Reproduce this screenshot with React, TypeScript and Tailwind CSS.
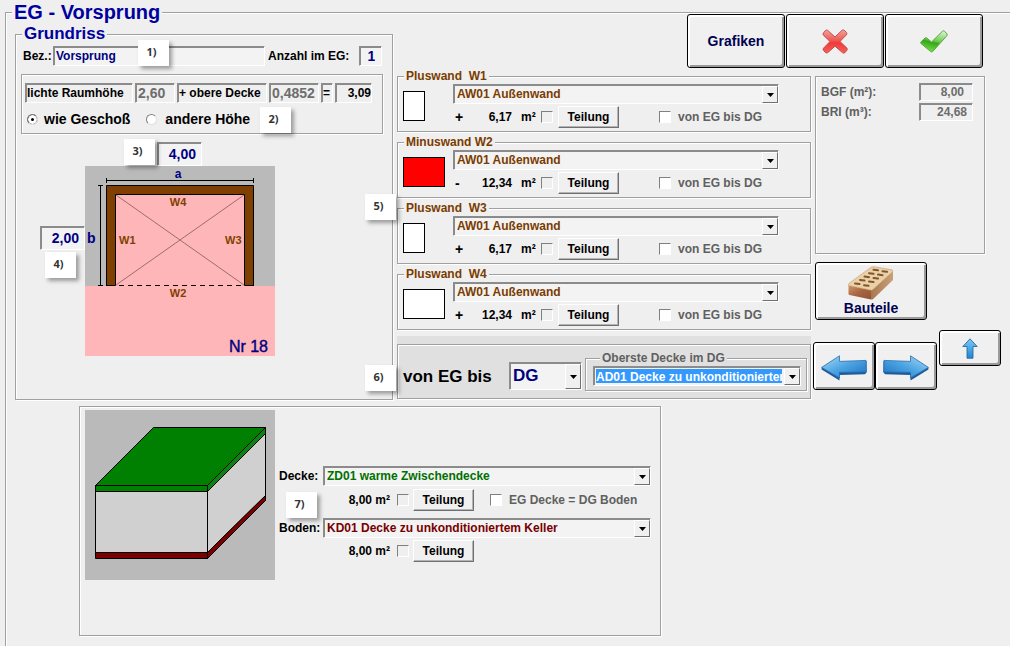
import { ReactNode, useState } from "react";
import { twMerge } from "tailwind-merge";

const etched =
  "border border-[#a0a0a0] shadow-[1px_1px_0_#fff,inset_1px_1px_0_#fff]";
const sunken =
  "border border-t-[#8c8c8c] border-l-[#8c8c8c] border-r-white border-b-white shadow-[inset_1px_1px_0_#8a8a8a]";
const bigButton =
  "flex items-center justify-center rounded-[3px] border border-black bg-[#f0f0f0] shadow-[inset_2px_2px_0_#fff,inset_-2px_-2px_0_#9a9a9a] cursor-pointer";

type Wall = {
  id: string;
  title: string;
  sign: string;
  area: string;
  swatch: string;
};

const walls: Wall[] = [
  { id: "w1", title: "Pluswand  W1", sign: "+", area: "6,17", swatch: "w-[22px] bg-white" },
  { id: "w2", title: "Minuswand W2", sign: "-", area: "12,34", swatch: "w-[42px] bg-[#ff0000]" },
  { id: "w3", title: "Pluswand  W3", sign: "+", area: "6,17", swatch: "w-[22px] bg-white" },
  { id: "w4", title: "Pluswand  W4", sign: "+", area: "12,34", swatch: "w-[42px] bg-white" },
];

const notes = [
  { text: "1)", place: "left-[138px] top-[40px]" },
  { text: "2)", place: "left-[260px] top-[107px]" },
  { text: "3)", place: "left-[124px] top-[139px]" },
  { text: "4)", place: "left-[45px] top-[252px]" },
  { text: "5)", place: "left-[365px] top-[194px]" },
  { text: "6)", place: "left-[365px] top-[365px]" },
  { text: "7)", place: "left-[286px] top-[492px]" },
];

function Combo({
  id,
  label,
  options,
  className,
  selectClassName,
}: {
  id: string;
  label?: string;
  options: string[];
  className?: string;
  selectClassName?: string;
}) {
  return (
    <div className={twMerge("relative h-5 min-w-0 bg-[#f3f3f3]", sunken, className)}>
      <select
        id={id}
        aria-label={label}
        className={twMerge(
          "block h-full w-full appearance-none bg-transparent pr-[18px] pl-[3px] text-xs font-bold outline-none",
          selectClassName
        )}
      >
        {options.map((option) => (
          <option key={option}>{option}</option>
        ))}
      </select>
      <span className="pointer-events-none absolute top-px right-0 bottom-0 flex w-4 items-center justify-center border border-t-white border-r-[#707070] border-b-[#707070] border-l-white bg-[#f0f0f0]">
        <svg width="7" height="4" viewBox="0 0 7 4">
          <path d="M0 0h7L3.5 4z" fill="#000" />
        </svg>
      </span>
    </div>
  );
}

function NumberField({
  id,
  label,
  value,
  disabled,
  className,
}: {
  id: string;
  label?: string;
  value: string;
  disabled?: boolean;
  className?: string;
}) {
  return (
    <input
      id={id}
      aria-label={label}
      defaultValue={value}
      disabled={disabled}
      className={twMerge(
        "min-w-0 bg-[#f3f3f3] px-[5px] text-right text-sm font-bold text-[#000080] outline-none disabled:bg-transparent disabled:text-[#6d6d6d]",
        sunken,
        className
      )}
    />
  );
}

function Tick({ id, label, className }: { id: string; label?: string; className?: string }) {
  return (
    <input
      id={id}
      type="checkbox"
      aria-label={label}
      className={twMerge(
        "size-3 shrink-0 appearance-none border border-t-[#808080] border-r-white border-b-white border-l-[#808080] checked:bg-black",
        className
      )}
    />
  );
}

function SplitButton({ className }: { className?: string }) {
  return (
    <button
      type="button"
      className={twMerge(
        "h-[22px] w-[61px] shrink-0 cursor-pointer border border-t-white border-r-[#707070] border-b-[#707070] border-l-white bg-[#f0f0f0] text-xs font-bold shadow-[inset_-1px_-1px_0_#b4b4b4]",
        className
      )}
    >
      Teilung
    </button>
  );
}

function WallPanel({ wall }: { wall: Wall }) {
  return (
    <fieldset className={twMerge("min-w-0 pb-[3px]", etched)}>
      <legend className="ml-1.5 bg-[#efefef] px-0.5 text-xs leading-4 font-bold whitespace-pre text-[#7a3c00]">
        {wall.title}
      </legend>
      <div className="flex">
        <div className="w-[55px] shrink-0 pt-[7px] pl-[5px]">
          <div className={twMerge("h-[30px] border border-black", wall.swatch)} />
        </div>
        <div className="flex min-w-0 flex-1 flex-col gap-0.5">
          <Combo
            id={`${wall.id}-type`}
            label={wall.title}
            options={["AW01 Außenwand"]}
            className="mr-[31px]"
            selectClassName="text-[#7a3c00]"
          />
          <div className="flex items-center">
            <span className="w-5 pl-0.5 text-sm leading-4 font-bold">{wall.sign}</span>
            <span className="w-[39px] text-right">{wall.area}</span>
            <span className="ml-[9px] w-5">m²</span>
            <Tick id={`${wall.id}-split`} label="Teilung aktiv" />
            <SplitButton className="ml-[5px]" />
            <Tick id={`${wall.id}-range`} className="ml-10 bg-white" />
            <label htmlFor={`${wall.id}-range`} className="ml-[7px] text-[#606060]">
              von EG bis DG
            </label>
          </div>
        </div>
      </div>
    </fieldset>
  );
}

function FloorPlan() {
  return (
    <svg width="190" height="190" viewBox="0 0 190 190" className="block">
      <rect width="190" height="190" fill="#bababa" />
      <rect y="120" width="190" height="70" fill="#ffb6b8" />
      <path d="M21.5 119.5V19.5h147v100" fill="#7f3f00" stroke="#000" />
      <path d="M30.5 120V28.5h129V120z" fill="#ffb6b8" />
      <path d="M30.5 119.5V28.5h129v91M21 119.5h9.5M159.5 119.5h9.5" fill="none" stroke="#000" />
      <path d="M31 29l128 90M159 29L31 119" stroke="#9c6c6e" />
      <path d="M34 119.5h125" stroke="#000" strokeDasharray="5 4" />
      <path d="M21.5 14.5h147M21.5 12v5M168.5 12v5M15.5 19.5v100M13 19.5h5M13 119.5h5" stroke="#000" fill="none" />
      <g fontWeight="700" fill="#7f3f00" fontSize="11">
        <text x="93" y="40" textAnchor="middle">W4</text>
        <text x="34" y="78">W1</text>
        <text x="140" y="78">W3</text>
        <text x="93" y="131" textAnchor="middle">W2</text>
      </g>
      <g fontWeight="700" fill="#000080">
        <text x="93" y="12" textAnchor="middle" fontSize="12">a</text>
        <text x="2" y="77" fontSize="14">b</text>
        <text x="183" y="186" textAnchor="end" fontSize="16" fontWeight="400" stroke="#000080" strokeWidth="0.4">
          Nr 18
        </text>
      </g>
    </svg>
  );
}

function StoreyBlock() {
  return (
    <svg width="190" height="170" viewBox="0 0 190 170" className="block shrink-0">
      <rect width="190" height="170" fill="#bababa" />
      <g stroke="#000" strokeLinejoin="round">
        <path d="M10.5 81.5h112v61h-112z" fill="#d0d0d0" />
        <path d="M122.5 81.5l58-58v62l-58 57z" fill="#d0d0d0" />
        <path d="M10.5 142.5h112v6h-112z" fill="#7b0000" />
        <path d="M122.5 142.5l58-57v5l-58 58z" fill="#7b0000" />
        <path d="M68.5 17.5h112l-58 58h-112z" fill="#008000" />
        <path d="M10.5 75.5h112v6h-112z" fill="#008000" />
        <path d="M122.5 75.5l58-58v6l-58 58z" fill="#108010" />
      </g>
    </svg>
  );
}

function CancelIcon() {
  return (
    <svg width="26" height="25" viewBox="0 0 26 25">
      <defs>
        <linearGradient id="red" x1="0" y1="0" x2="0" y2="1">
          <stop offset="0" stopColor="#f6a09c" />
          <stop offset="0.45" stopColor="#ee5a55" />
          <stop offset="0.55" stopColor="#f23a38" />
          <stop offset="1" stopColor="#f5605c" />
        </linearGradient>
      </defs>
      <path
        d="M5.500 1.200L13 8l7.200-6.800q1.400-.8 2.600.5l1.800 2q.8 1.200-.3 2.200L18 12.500l7 6.700q.8 1-.2 2.200L22.800 23.800q-1.300.8-2.400-.2L13 17.200l-7.200 6.400q-1.200.9-2.400-.2L1.400 21.400q-.9-1.200.2-2.300L8 12.500 1.400 6.200q-.9-1.200 0-2.200L3.300 1.600q1-.9 2.200-.4z"
        fill="url(#red)"
        stroke="#c0524f"
      />
    </svg>
  );
}

function ConfirmIcon() {
  return (
    <svg width="28" height="23" viewBox="0 0 28 23">
      <defs>
        <linearGradient id="green" x1="0.6" y1="0" x2="0.3" y2="1">
          <stop offset="0" stopColor="#d0f0c4" />
          <stop offset="0.45" stopColor="#6cc94f" />
          <stop offset="0.55" stopColor="#35a814" />
          <stop offset="1" stopColor="#7be34d" />
        </linearGradient>
      </defs>
      <path
        d="M.8 12L5 8q1-.7 1.900.1L11.500 12 22.500 1.200q1-.8 2 0l2.500 2.800q.6 1-.2 1.800L12.600 21.600q-.8.8-1.800 0L.9 13.400q-.6-.8-.1-1.400z"
        fill="url(#green)"
        stroke="#5aa548"
      />
    </svg>
  );
}

function BrickIcon() {
  return (
    <svg width="48" height="34" viewBox="0 0 48 34">
      <defs>
        <linearGradient id="brickFront" x1="0" y1="0" x2="1" y2="1">
          <stop offset="0" stopColor="#cf9468" />
          <stop offset="0.5" stopColor="#a86440" />
          <stop offset="1" stopColor="#8e5436" />
        </linearGradient>
        <linearGradient id="brickSide" x1="0" y1="0" x2="1" y2="0">
          <stop offset="0" stopColor="#a97850" />
          <stop offset="1" stopColor="#c9a079" />
        </linearGradient>
      </defs>
      <path d="M1.500 19.500L24 24V33.500L2.500 29Q1 28.500 1.500 27z" fill="url(#brickFront)" />
      <path d="M24 24L46 5.500V14L26.500 32.700Q25 33.900 24 33.500z" fill="url(#brickSide)" />
      <path
        d="M1.500 19.500Q.8 18.500 2.500 17L23 2q2-1.400 4-1.200L45 3.800q1.500.6.600 1.900L26 23.500q-1 .9-2.500.6z"
        fill="#ecd0a6"
        stroke="#c19a6c"
        strokeWidth=".6"
      />
      <g stroke="#7d5734" strokeWidth="2" strokeLinecap="round">
        <path d="M26.500 3.800l4.500.5M35.500 5.200l4.500.6" />
        <path d="M22 7.200l4.500.6M31 8.600l4.500.6" />
        <path d="M17.500 10.600l4.500.6M26.500 12l4.500.6" />
        <path d="M13 14l4.500.6M22 15.500l4.500.6" />
        <path d="M8 17.500l4.500.6M17 19.200l4.500.6" />
      </g>
    </svg>
  );
}

function ArrowIcon({ direction }: { direction: "left" | "right" }) {
  return (
    <svg
      width="46"
      height="26"
      viewBox="0 0 46 26"
      className={direction === "right" ? "mt-1 -scale-x-100" : "mt-1"}
    >
      <defs>
        <linearGradient id={`blue-${direction}`} x1="0" y1="0" x2="1" y2="1">
          <stop offset="0" stopColor="#a9dcf8" />
          <stop offset="0.5" stopColor="#4ba3e2" />
          <stop offset="1" stopColor="#1c6fc0" />
        </linearGradient>
      </defs>
      <path d="M.6 12.400V14.500L18.500 25.400V20L44 19.200 45.500 17.500V6L18.500 7z" fill="#1d5c9c" />
      <path
        d="M.6 12.400L18.500.8V6.400L45 5.400 45.300 17 18.500 17.400V23z"
        fill={`url(#blue-${direction})`}
        stroke="#2a6cab"
        strokeWidth=".8"
      />
    </svg>
  );
}

function UpIcon() {
  return (
    <svg width="16" height="21" viewBox="0 0 16 21">
      <defs>
        <linearGradient id="blueUp" x1="0" y1="0" x2="0" y2="1">
          <stop offset="0" stopColor="#7cc8f2" />
          <stop offset="1" stopColor="#1e86d6" />
        </linearGradient>
      </defs>
      <path d="M8 .8L15.200 8.500H11V20.200H5V8.500H.8z" fill="url(#blueUp)" stroke="#276ba8" strokeWidth=".9" />
    </svg>
  );
}

function SunkenText({ children, className }: { children: ReactNode; className?: string }) {
  return (
    <span className={twMerge("flex h-5 items-center pl-px whitespace-nowrap", sunken, className)}>
      {children}
    </span>
  );
}

export default function App() {
  const [heightMode, setHeightMode] = useState("storey");

  return (
    <main className="relative flex min-h-screen flex-col bg-[#efefef] pl-[5px] font-['Liberation_Sans',Arial,sans-serif] text-xs leading-4 font-bold text-black">
      <fieldset className="min-w-0 flex-1 border-t border-l border-[#a0a0a0] pb-2 shadow-[inset_1px_1px_0_#fff]">
        <legend className="ml-1.5 bg-[#efefef] px-0.5 text-xl leading-6 text-[#0000a0]">
          EG - Vorsprung
        </legend>

        <div className="flex pl-[9px]">
          {/* Floor plan input */}
          <fieldset className={twMerge("w-[378px] min-w-0 shrink-0", etched)}>
            <legend className="ml-1.5 bg-[#efefef] px-0.5 text-[17px] leading-5 text-[#0000a0]">
              Grundriss
            </legend>
            <div className="flex items-center pt-0.5 pl-[7px]">
              <label htmlFor="name" className="w-[30px]">Bez.:</label>
              <NumberField
                id="name"
                value="Vorsprung"
                className="h-5 w-[212px] px-0.5 text-left text-xs"
              />
              <label htmlFor="count" className="ml-[3px]">Anzahl im EG:</label>
              <NumberField id="count" value="1" className="ml-2.5 h-5 w-[23px] px-1.5" />
            </div>

            <div className={twMerge("mt-2 mr-[9px] ml-[5px] h-[60px] px-[3px] pt-2", etched)}>
              <div className="flex gap-0.5">
                <SunkenText className="w-[108px]">
                  <label htmlFor="room-height">lichte Raumhöhe</label>
                </SunkenText>
                <NumberField id="room-height" value="2,60" disabled className="h-5 w-10 px-0.5 text-left" />
                <SunkenText className="w-[90px]">
                  <label htmlFor="ceiling">+ obere Decke</label>
                </SunkenText>
                <NumberField id="ceiling" value="0,4852" disabled className="h-5 w-[50px] px-0.5 text-left" />
                <SunkenText className="w-3">=</SunkenText>
                <SunkenText className="w-[37px] justify-end">3,09</SunkenText>
              </div>
              <div className="mt-1.5 flex items-center text-sm leading-5">
                <input
                  id="storey"
                  type="radio"
                  name="height"
                  checked={heightMode === "storey"}
                  onChange={() => setHeightMode("storey")}
                  className="mr-1.5 ml-0.5 size-[11px] appearance-none rounded-full border border-t-[#808080] border-r-[#e0e0e0] border-b-[#e0e0e0] border-l-[#808080] bg-white checked:bg-black checked:shadow-[inset_0_0_0_3px_#fff]"
                />
                <label htmlFor="storey">wie Geschoß</label>
                <input
                  id="other"
                  type="radio"
                  name="height"
                  checked={heightMode === "other"}
                  onChange={() => setHeightMode("other")}
                  className="mr-2 ml-4 size-[11px] appearance-none rounded-full border border-t-[#808080] border-r-[#e0e0e0] border-b-[#e0e0e0] border-l-[#808080] bg-white checked:bg-black checked:shadow-[inset_0_0_0_3px_#fff]"
                />
                <label htmlFor="other">andere Höhe</label>
              </div>
            </div>

            <div className="mt-2 ml-[141px]">
              <NumberField id="side-a" label="a" value="4,00" className="block h-6 w-[45px]" />
            </div>
            <div className="flex pb-[43px] pl-6">
              <NumberField id="side-b" label="b" value="2,00" className="mt-[60px] h-6 w-[45px] shrink-0" />
              <FloorPlan />
            </div>
          </fieldset>

          <div className="min-w-0 flex-1 pl-1">
            {/* Actions */}
            <div className="-mt-2.5 mr-[27px] flex justify-end gap-px">
              <button type="button" className={twMerge(bigButton, "h-[54px] w-[98px] text-sm text-[#000050]")}>
                Grafiken
              </button>
              <button type="button" aria-label="Abbrechen" className={twMerge(bigButton, "h-[54px] w-[98px]")}>
                <CancelIcon />
              </button>
              <button type="button" aria-label="Übernehmen" className={twMerge(bigButton, "h-[54px] w-[98px]")}>
                <ConfirmIcon />
              </button>
            </div>

            <div className="flex">
              {/* Walls */}
              <div className="flex min-w-0 flex-1 flex-col gap-0.5">
                {walls.map((wall) => (
                  <WallPanel key={wall.id} wall={wall} />
                ))}

                <div className="mt-1 bg-[#e0e0e0] pt-2">
                  <div className={twMerge("flex h-[55px] items-start pl-[5px]", etched)}>
                    <label htmlFor="storey-to" className="w-[106px] shrink-0 pt-5 text-[17px] leading-6">
                      von EG bis
                    </label>
                    <Combo
                      id="storey-to"
                      options={["DG"]}
                      className="mt-[17px] h-7 w-[73px] shrink-0"
                      selectClassName="pl-[3px] text-[17px] text-[#000080]"
                    />
                    <fieldset className="mt-[5px] mr-[3px] ml-[3px] min-w-0 flex-1 border border-[#a0a0a0] pr-[5px] pb-1 pl-[7px] shadow-[1px_1px_0_#fff,inset_1px_1px_0_#fff]">
                      <legend className="ml-[7px] bg-[#e0e0e0] px-0.5 whitespace-nowrap text-[#606060]">
                        Oberste Decke im DG
                      </legend>
                      <Combo
                        id="top-ceiling"
                        label="Oberste Decke im DG"
                        options={["AD01 Decke zu unkonditioniertem Keller"]}
                        selectClassName="bg-[#3399ff] bg-clip-content py-0.5 pr-[18px] pl-0.5 text-white"
                      />
                    </fieldset>
                  </div>
                </div>
              </div>

              {/* Totals and navigation */}
              <div className="w-[199px] shrink-0 pt-2 pl-0.5">
                <div className={twMerge("ml-0.5 h-[178px] w-[170px] pt-1.5 pr-[11px] pl-[5px] text-[#606060]", etched)}>
                  <div className="flex items-center justify-between">
                    <label htmlFor="bgf">BGF (m²):</label>
                    <NumberField id="bgf" value="8,00" disabled className="h-[18px] w-[54px] px-2 text-xs" />
                  </div>
                  <div className="mt-0.5 flex items-center justify-between">
                    <label htmlFor="bri">BRI (m³):</label>
                    <NumberField id="bri" value="24,68" disabled className="h-[18px] w-[54px] px-[5px] text-xs" />
                  </div>
                </div>
                <button
                  type="button"
                  className={twMerge(bigButton, "mt-2 ml-0.5 h-[58px] w-28 flex-col text-sm leading-4 text-[#000050]")}
                >
                  <BrickIcon />
                  Bauteile
                </button>
                <div className="mt-2.5 flex items-start">
                  <button type="button" aria-label="Zurück" className={twMerge(bigButton, "mt-3 h-12 w-[62px]")}>
                    <ArrowIcon direction="left" />
                  </button>
                  <button type="button" aria-label="Weiter" className={twMerge(bigButton, "mt-3 h-12 w-[62px]")}>
                    <ArrowIcon direction="right" />
                  </button>
                  <button type="button" aria-label="Nach oben" className={twMerge(bigButton, "ml-0.5 h-9 w-[62px]")}>
                    <UpIcon />
                  </button>
                </div>
              </div>
            </div>
          </div>
        </div>

        {/* Ceiling and floor */}
        <div className={twMerge("mt-1.5 ml-[73px] flex h-[230px] w-[582px] items-start pt-[3px] pl-[5px]", etched)}>
          <StoreyBlock />
          <div className="mr-[9px] min-w-0 flex-1 pt-14 pl-1">
            <div className="flex items-center">
              <label htmlFor="ceiling-type" className="w-11 shrink-0">Decke:</label>
              <Combo
                id="ceiling-type"
                options={["ZD01 warme Zwischendecke"]}
                className="flex-1"
                selectClassName="text-[#007000]"
              />
            </div>
            <div className="mt-[3px] flex items-center">
              <span className="w-[111px] text-right">8,00 m²</span>
              <Tick id="ceiling-split" label="Teilung Decke" className="ml-[7px]" />
              <SplitButton className="ml-1" />
              <Tick id="same-floor" className="ml-4 bg-white" />
              <label htmlFor="same-floor" className="ml-[7px] text-[#606060]">
                EG Decke = DG Boden
              </label>
            </div>
            <div className="mt-[7px] flex items-center">
              <label htmlFor="floor-type" className="w-11 shrink-0">Boden:</label>
              <Combo
                id="floor-type"
                options={["KD01 Decke zu unkonditioniertem Keller"]}
                className="flex-1"
                selectClassName="text-[#780000]"
              />
            </div>
            <div className="mt-0.5 flex items-center">
              <span className="w-[111px] text-right">8,00 m²</span>
              <Tick id="floor-split" label="Teilung Boden" className="ml-[7px]" />
              <SplitButton className="ml-1" />
            </div>
          </div>
        </div>
      </fieldset>

      {/* Numbered notes on top of the form */}
      {notes.map((note) => (
        <span
          key={note.text}
          className={twMerge(
            "absolute flex h-[26px] w-[31px] items-center justify-center bg-white pr-1 pb-0.5 font-['Open_Sans',sans-serif] text-[11px] font-bold text-[#333] shadow-[3px_3px_4px_rgba(0,0,0,0.35)]",
            note.place
          )}
        >
          {note.text}
        </span>
      ))}
    </main>
  );
}
